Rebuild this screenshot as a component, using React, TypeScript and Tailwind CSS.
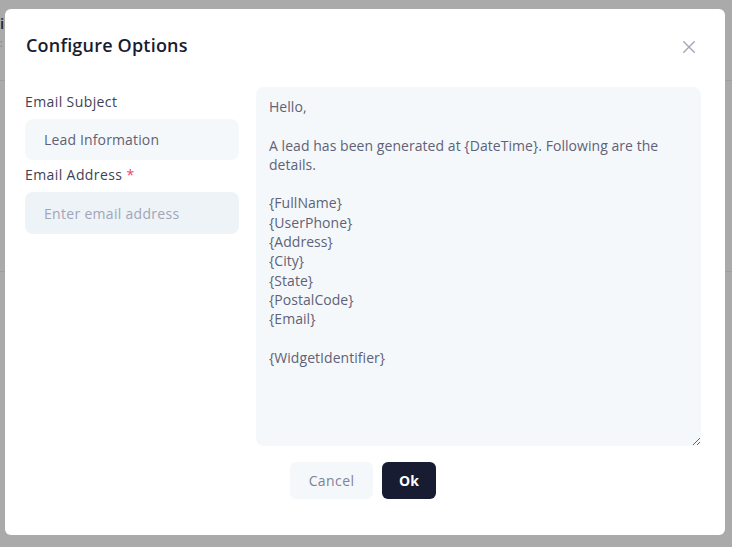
import React from "react";

const body = `Hello,

A lead has been generated at {DateTime}. Following are the details.

{FullName}
{UserPhone}
{Address}
{City}
{State}
{PostalCode}
{Email}

{WidgetIdentifier}`;

export default function App() {
  return (
    <div className="relative w-[732px] h-[547px] overflow-hidden bg-[#aaaaaa] font-['Open_Sans',sans-serif]">
      {/* glimpses of the page under the overlay */}
      <div className="absolute left-0 top-[13px] text-[15px] leading-[20px] font-semibold text-[#1d1f2b]">ic</div>
      <div className="absolute left-0 top-[36px] text-[10px] leading-[14px] text-[#7d7f88]">
        : <span className="text-[#b08a55]">·</span>
      </div>
      <div className="absolute left-0 right-0 top-[80px] h-px bg-[#9f9f9f]" />
      <div className="absolute left-0 right-0 top-[271px] h-px bg-[#9f9f9f]" />

      <div className="relative pt-[9px] pl-[5px]">
        <div className="w-[720px] h-[526px] bg-white rounded-[6px] flex flex-col">
          {/* header */}
          <div className="flex items-center justify-between pl-[21px] pr-[30px] pt-[22px]">
            <h2 className="text-[18px] leading-[28px] font-semibold tracking-[0.2px] text-[#181c32]">Configure Options</h2>
            <svg width="12" height="12" viewBox="0 0 12 12" className="mt-[3px] text-[#a1a5b7]">
              <path d="M0.75 0.75 L11.25 11.25 M11.25 0.75 L0.75 11.25" stroke="currentColor" strokeWidth="1.4" strokeLinecap="round" />
            </svg>
          </div>

          {/* body */}
          <div className="flex items-start gap-[17px] pl-[20px] pr-[24px] mt-[28px]">
            <div className="w-[214px] flex flex-col pt-[5px]">
              <label className="text-[14px] leading-[20px] tracking-[0.4px] text-[#3f4254] mb-[7px]">Email Subject</label>
              <input
                defaultValue="Lead Information"
                className="h-[41px] w-full rounded-[8px] bg-[#f5f8fa] px-[19px] text-[14px] tracking-[0.15px] text-[#5e6278] outline-none"
              />
              <label className="text-[14px] leading-[20px] tracking-[0.4px] text-[#3f4254] mt-[5px] mb-[7px]">
                Email Address <span className="text-[#f1416c]">*</span>
              </label>
              <input
                placeholder="Enter email address"
                className="h-[42px] w-full rounded-[8px] bg-[#eef3f7] px-[19px] text-[14px] tracking-[0.3px] text-[#5e6278] placeholder:text-[#a1a5b7] outline-none"
              />
            </div>
            <textarea
              defaultValue={body}
              className="w-[445px] h-[359px] rounded-[8px] bg-[#f5f8fa] px-[13px] pt-[10px] text-[14px] leading-[19.3px] tracking-[0.05px] text-[#5e6278] outline-none"
            />
          </div>

          {/* footer */}
          <div className="flex justify-center gap-[9px] mt-[16px] pr-[4px]">
            <button className="w-[83px] h-[37px] rounded-[6px] bg-[#f5f8fa] text-[14px] tracking-[0.4px] text-[#7e8299]">Cancel</button>
            <button className="w-[54px] h-[37px] rounded-[6px] bg-[#181c32] text-[14px] font-bold text-white">Ok</button>
          </div>
        </div>
      </div>
    </div>
  );
}
